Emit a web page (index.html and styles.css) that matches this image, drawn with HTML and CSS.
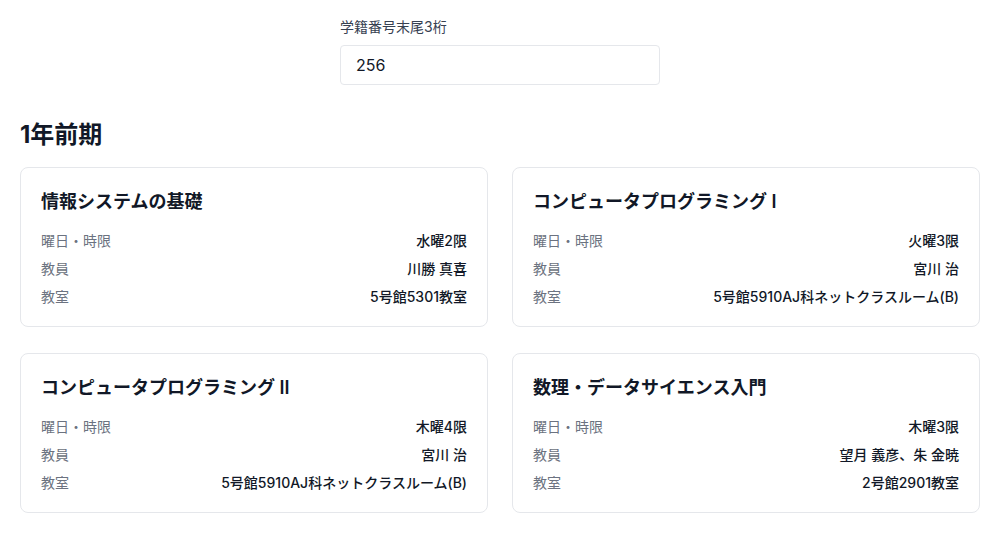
FILE: index.html
```html
<!DOCTYPE html>
<html lang="ja">
<head>
<meta charset="utf-8">
<link rel="stylesheet" href="styles.css">
</head>
<body>
<main class="page">
  <div class="search">
    <label class="search-label" for="sid">学籍番号末尾3桁</label>
    <input id="sid" class="search-input" type="text" value="256">
  </div>
  <h2 class="term">1年前期</h2>
  <div class="grid">
    <section class="card">
      <h3 class="card-title">情報システムの基礎</h3>
      <div class="rows">
        <div class="row"><span class="k">曜日・時限</span><span class="v">水曜2限</span></div>
        <div class="row"><span class="k">教員</span><span class="v">川勝 真喜</span></div>
        <div class="row"><span class="k">教室</span><span class="v">5号館5301教室</span></div>
      </div>
    </section>
    <section class="card">
      <h3 class="card-title">コンピュータプログラミング I</h3>
      <div class="rows">
        <div class="row"><span class="k">曜日・時限</span><span class="v">火曜3限</span></div>
        <div class="row"><span class="k">教員</span><span class="v">宮川 治</span></div>
        <div class="row"><span class="k">教室</span><span class="v">5号館5910AJ科ネットクラスルーム(B)</span></div>
      </div>
    </section>
    <section class="card">
      <h3 class="card-title">コンピュータプログラミング II</h3>
      <div class="rows">
        <div class="row"><span class="k">曜日・時限</span><span class="v">木曜4限</span></div>
        <div class="row"><span class="k">教員</span><span class="v">宮川 治</span></div>
        <div class="row"><span class="k">教室</span><span class="v">5号館5910AJ科ネットクラスルーム(B)</span></div>
      </div>
    </section>
    <section class="card">
      <h3 class="card-title">数理・データサイエンス入門</h3>
      <div class="rows">
        <div class="row"><span class="k">曜日・時限</span><span class="v">木曜3限</span></div>
        <div class="row"><span class="k">教員</span><span class="v">望月 義彦、朱 金暁</span></div>
        <div class="row"><span class="k">教室</span><span class="v">2号館2901教室</span></div>
      </div>
    </section>
  </div>
</main>
</body>
</html>
```

FILE: styles.css
```css
* { box-sizing: border-box; }
html, body { margin: 0; padding: 0; background: #fff; }
body {
  font-family: Inter, "Noto Sans CJK JP", sans-serif;
  color: #111827;
}
.page {
  width: 960px;
  margin-left: 20px;
  padding-top: 17px;
}
.search {
  width: 320px;
  margin: 0 auto;
  display: flex;
  flex-direction: column;
  gap: 8px;
}
.search-label {
  font-size: 14px;
  line-height: 20px;
  color: #374151;
}
.search-input {
  height: 40px;
  width: 320px;
  border: 1px solid #e5e7eb;
  border-radius: 4px;
  padding: 0 15px;
  font: inherit;
  font-size: 16px;
  color: #111827;
  outline: none;
}
.term {
  margin: 34px 0 16px;
  font-size: 24px;
  line-height: 32px;
  font-weight: 700;
  color: #111827;
}
.grid {
  display: grid;
  grid-template-columns: 1fr 1fr;
  column-gap: 24px;
  row-gap: 26px;
}
.card {
  border: 1px solid #e5e7eb;
  border-radius: 8px;
  padding: 20px;
  height: 160px;
}
.card-title {
  margin: 0 0 15px;
  font-size: 18px;
  line-height: 28px;
  font-weight: 600;
  color: #111827;
}
.rows {
  display: flex;
  flex-direction: column;
  gap: 8px;
}
.row {
  display: flex;
  justify-content: space-between;
  font-size: 14px;
  line-height: 20px;
}
.k { color: #6b7280; }
.v { color: #111827; font-weight: 500; }
```
